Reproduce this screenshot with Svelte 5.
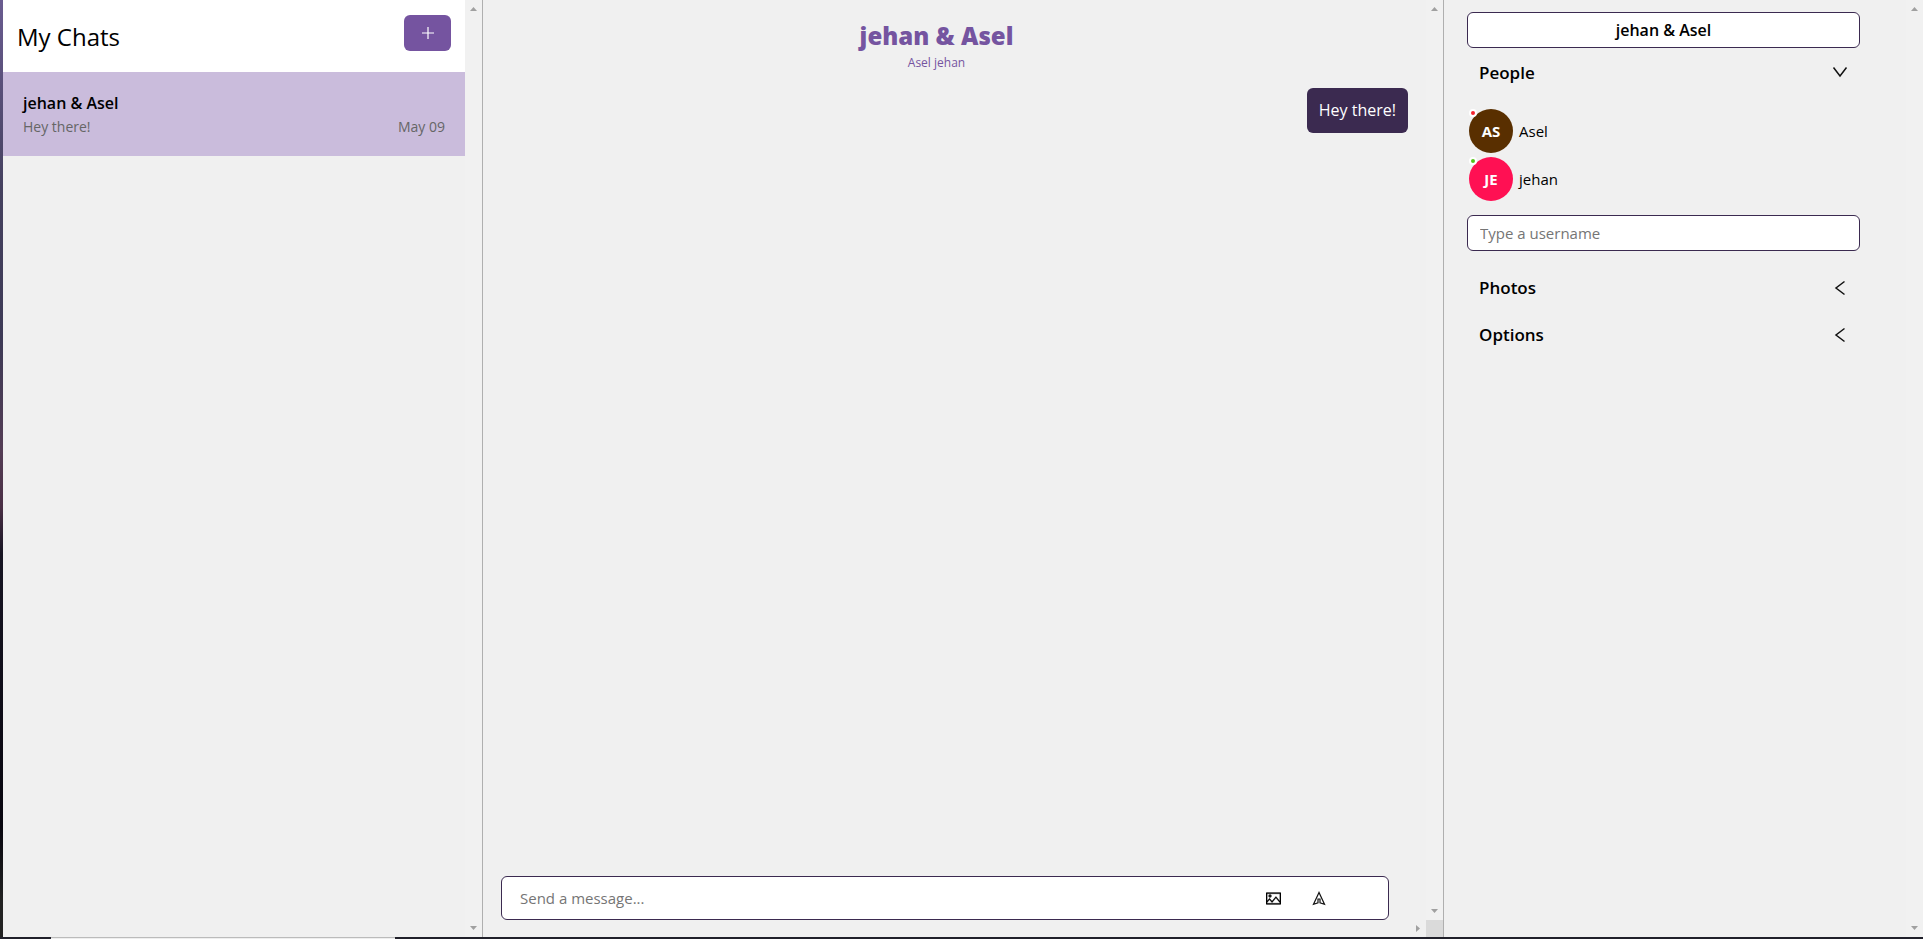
<script>
  const people = [
    { name: 'Asel', initials: 'AS', color: '#592f00', status: '#f5222d' },
    { name: 'jehan', initials: 'JE', color: '#ff1053', status: '#52c41a' }
  ];
  const closed = ['Photos', 'Options'];
</script>

{#snippet scrollbar()}
  <div class="scrollbar" aria-hidden="true">
    <svg width="7" height="4" viewBox="0 0 7 4"><path d="M0 4 3.500 0 7 4z" /></svg>
    <svg width="7" height="4" viewBox="0 0 7 4"><path d="M0 0 3.500 4 7 0z" /></svg>
  </div>
{/snippet}

<div class="page">
  <div class="app">
    <aside class="column chats">
      <div class="body">
        <header class="chats-head">
          <h1>My Chats</h1>
          <button class="new" aria-label="New chat">
            <svg width="14" height="14" viewBox="0 0 14 14"><path d="M7 1v12M1 7h12" /></svg>
          </button>
        </header>
        <button class="card">
          <strong>jehan &amp; Asel</strong>
          <span class="preview"><span>Hey there!</span><span>May 09</span></span>
        </button>
      </div>
      {@render scrollbar()}
    </aside>

    <main class="feed">
      <div class="column view">
        <div class="body feed-body">
          <header class="feed-head">
            <h2>jehan &amp; Asel</h2>
            <p>Asel jehan</p>
          </header>
          <div class="bubble">Hey there!</div>
          <form class="composer">
            <input aria-label="Message" placeholder="Send a message..." />
            <button type="button" aria-label="Attach picture">
              <svg width="15" height="15" viewBox="64 64 896 896" fill="#000" stroke="#000" stroke-width="16"><path d="M928 160H96c-17.700 0-32 14.300-32 32v640c0 17.700 14.300 32 32 32h832c17.700 0 32-14.300 32-32V192c0-17.700-14.300-32-32-32zm-40 632H136v-39.900l138.500-164.300 150.100 178L658.100 489 888 761.600V792zm0-129.800L664.200 396.800c-3.200-3.800-9-3.800-12.200 0L424.600 666.400l-144-170.700c-3.200-3.800-9-3.800-12.200 0L136 652.700V232h752v430.200zM304 456a88 88 0 1 0 0-176 88 88 0 0 0 0 176zm0-116c15.500 0 28 12.500 28 28s-12.500 28-28 28-28-12.500-28-28 12.500-28 28-28z" /></svg>
            </button>
            <button type="button" aria-label="Send">
              <svg width="16" height="16" viewBox="0 0 16 16" fill="none" stroke="#111" stroke-width="1.200"><path d="M8 2.500 2.500 14.300 7 12.800V9h2v3.800l4.500 1.500z" /></svg>
            </button>
          </form>
        </div>
        {@render scrollbar()}
      </div>
      <div class="hbar" aria-hidden="true">
        <svg width="4" height="7" viewBox="0 0 4 7"><path d="M0 0 4 3.500 0 7z" /></svg>
        <span></span>
      </div>
    </main>

    <aside class="column settings">
      <div class="body settings-body">
        <input class="field title" aria-label="Chat title" value="jehan & Asel" />
        <button class="section people">
          People
          <svg width="16" height="16" viewBox="0 0 16 16"><path d="M1.500 3.500 8 12l6.500-8.500" /></svg>
        </button>
        <ul>
          {#each people as p}
            <li>
              <span class="avatar" style="background:{p.color}">
                {p.initials}<i style="background:{p.status}"></i>
              </span>
              {p.name}
            </li>
          {/each}
        </ul>
        <input class="field" aria-label="Username" placeholder="Type a username" />
        <div class="closed">
          {#each closed as name}
            <button class="section">
              {name}
              <svg width="16" height="16" viewBox="0 0 16 16"><path d="M12.500 1.500 4 8l8.500 6.500" /></svg>
            </button>
          {/each}
        </div>
      </div>
      {@render scrollbar()}
    </aside>
  </div>
  <div class="taskbar"><span></span></div>
</div>

<style>
  :global(body) { margin: 0; }
  .page, .page * { box-sizing: border-box; }
  .page {
    display: flex;
    flex-direction: column;
    height: 100vh;
    padding-left: 3px;
    background: linear-gradient(#6a5c90, #45415f 20%, #3d3a56 36%, #543d55 48%, #4a2f45 54%, #171523 59%, #08060f 88%, #222 96%);
    font-family: "Open Sans", "Noto Sans", sans-serif;
    font-size: 15px;
    color: #000;
  }
  h1, h2, p, ul { margin: 0; padding: 0; }
  button { border: 0; padding: 0; background: none; font: inherit; color: inherit; cursor: pointer; }
  input { font: inherit; color: inherit; outline: 0; }
  input::placeholder { color: #757575; opacity: 1; }
  .app { flex: 1; min-height: 0; display: grid; grid-template-columns: 1fr 2fr 1fr; background: #f0f0f0; }
  .column { display: flex; min-width: 0; min-height: 0; }
  .body { flex: 1; min-width: 0; }
  .scrollbar {
    width: 17px;
    flex: none;
    display: flex;
    flex-direction: column;
    justify-content: space-between;
    align-items: center;
    padding: 7px 0;
    background: #f1f1f1;
    fill: #a0a0a0;
  }
  .chats { border-right: 1px solid #afafaf; }
  .settings { border-left: 1px solid #afafaf; }

  .chats-head { display: flex; justify-content: space-between; align-items: flex-start; height: 72px; padding: 15px 14px; background: #fff; }
  h1 { font-size: 24px; line-height: 44px; font-weight: 500; }
  .new { display: grid; place-items: center; width: 47px; height: 36px; border-radius: 6px; background: #7554a0; }
  .new svg { stroke: #fff; stroke-width: 1.2; }
  .card { display: flex; flex-direction: column; width: 100%; height: 84px; padding: 19px 20px 0; background: #cabcdc; text-align: left; }
  .card strong { font-size: 16px; font-weight: 600; line-height: 24px; }
  .preview { display: flex; justify-content: space-between; align-self: stretch; font-size: 14px; line-height: 24px; color: #666; }

  .feed { display: flex; flex-direction: column; min-width: 0; min-height: 0; }
  .view { flex: 1; }
  .feed-body { display: flex; flex-direction: column; padding: 18px; padding-bottom: 0; }
  .feed-head { padding: 1px 36px 0 0; text-align: center; color: #7554a0; }
  h2 { font-size: 24px; font-weight: 800; line-height: 34px; }
  .feed-head p { font-size: 12px; line-height: 20px; }
  .bubble { align-self: flex-end; margin-top: 15px; padding: 0 12px; border-radius: 6px; background: #3b2a50; color: #fff; font-size: 16px; line-height: 45px; }
  .composer { display: flex; align-items: center; height: 44px; margin: auto 19px 0 0; padding: 0 61px 0 18px; gap: 30px; border: 1px solid #3b2a50; border-radius: 6px; background: #fff; }
  .composer input { flex: 1; min-width: 0; border: 0; padding: 0; background: none; }
  .composer button { display: grid; }
  .hbar { display: flex; justify-content: flex-end; align-items: center; gap: 6px; height: 17px; fill: #a0a0a0; }
  .hbar span { width: 17px; height: 17px; background: #dadada; }

  .settings-body { padding: 12px 46px 0 23px; }
  .field { display: block; width: 100%; height: 36px; padding: 0 12px; border: 1px solid #3b2a50; border-radius: 6px; background: #fff; }
  .title { font-size: 16px; font-weight: 600; text-align: center; }
  .section { display: flex; justify-content: space-between; align-items: center; width: 100%; height: 47px; padding: 0 12px; font-size: 17px; font-weight: 600; }
  .section svg { fill: none; stroke: #111; stroke-width: 1.5; }
  .people { height: 48px; }
  ul { display: grid; gap: 4px; padding: 13px 2px 14px; list-style: none; }
  li { display: flex; align-items: center; gap: 6px; }
  .avatar { position: relative; display: grid; place-items: center; width: 44px; height: 44px; border-radius: 50%; color: #fff; font-weight: 700; }
  .avatar i { position: absolute; left: 0; top: 0; width: 8px; height: 8px; border: 2px solid #fff; border-radius: 50%; }
  .closed { padding-top: 13px; }

  .taskbar { height: 2px; margin-left: -3px; padding-left: 51px; background: #20202a; }
  .taskbar span { display: block; width: 344px; height: 2px; border-top: 1px solid #bbb; background: #eee; }
</style>
